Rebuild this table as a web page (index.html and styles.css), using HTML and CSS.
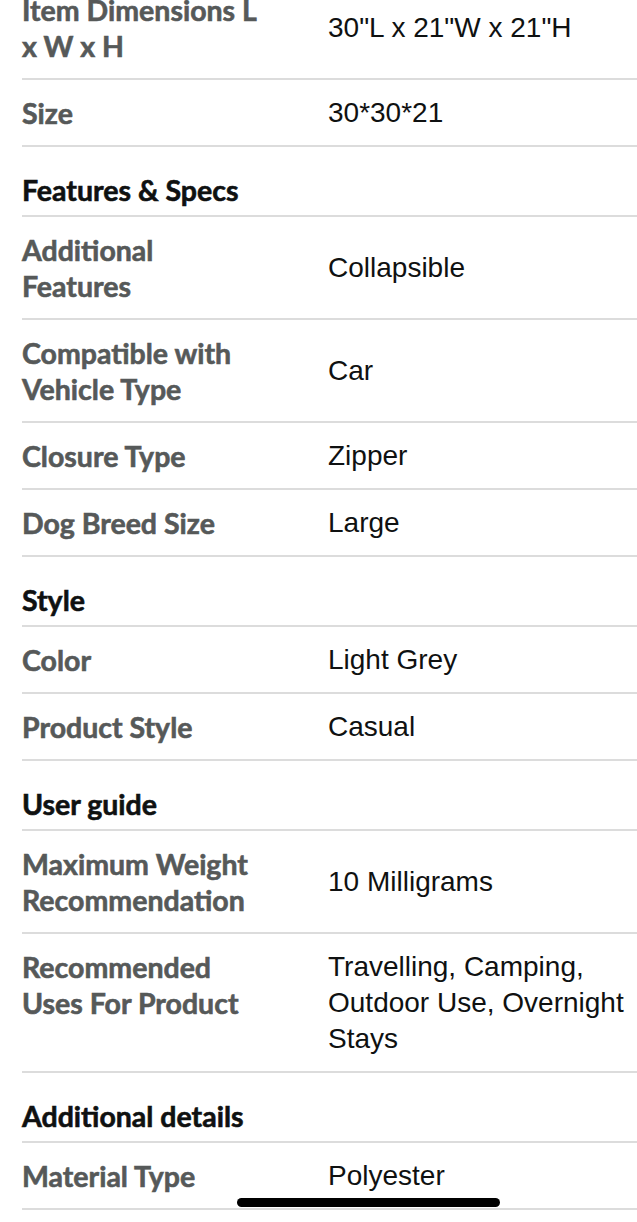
FILE: index.html
```html
<!DOCTYPE html>
<html lang="en">
<head>
<meta charset="utf-8">
<title>Product details</title>
<link rel="stylesheet" href="styles.css">
</head>
<body>
<div class="specs">
  <div class="row first"><div class="label">Item Dimensions L x W x H</div><div class="value">30"L x 21"W x 21"H</div></div>
  <div class="row"><div class="label">Size</div><div class="value">30*30*21</div></div>
  <div class="head">Features &amp; Specs</div>
  <div class="row"><div class="label">Additional Features</div><div class="value">Collapsible</div></div>
  <div class="row"><div class="label">Compatible with Vehicle Type</div><div class="value">Car</div></div>
  <div class="row"><div class="label">Closure Type</div><div class="value">Zipper</div></div>
  <div class="row"><div class="label">Dog Breed Size</div><div class="value">Large</div></div>
  <div class="head">Style</div>
  <div class="row"><div class="label">Color</div><div class="value">Light Grey</div></div>
  <div class="row"><div class="label">Product Style</div><div class="value">Casual</div></div>
  <div class="head">User guide</div>
  <div class="row"><div class="label">Maximum Weight Recommendation</div><div class="value">10 Milligrams</div></div>
  <div class="row"><div class="label">Recommended Uses For Product</div><div class="value">Travelling, Camping, Outdoor Use, Overnight Stays</div></div>
  <div class="head">Additional details</div>
  <div class="row"><div class="label">Material Type</div><div class="value">Polyester</div></div>
</div>
<div class="home-indicator"></div>
</body>
</html>
```
FILE: styles.css
```css
html, body {
  margin: 0;
  padding: 0;
  background: #ffffff;
}
body {
  font-family: Lato, "Liberation Sans", Arial, sans-serif;
  overflow: hidden;
  height: 1222px;
}
.specs {
  margin-left: 22px;
}
.row {
  display: grid;
  grid-template-columns: 306px 1fr;
  align-items: center;
  padding: 15px 8px 14px 0;
  line-height: 36px;
  border-bottom: 2px solid #dcdcdc;
}
.row.first {
  margin-top: -23px;
}
.label {
  align-self: start;
  font-weight: 700;
  font-size: 28.5px;
  color: #565959;
  -webkit-text-stroke: 0.6px #565959;
  padding-right: 64px;
}
.value {
  font-family: "Liberation Sans", Arial, sans-serif;
  font-size: 28px;
  color: #0f1111;
}
.head {
  font-weight: 700;
  font-size: 28.5px;
  color: #0f1111;
  -webkit-text-stroke: 0.6px #0f1111;
  line-height: 36px;
  padding: 25px 0 7px 0;
  border-bottom: 2px solid #dcdcdc;
}
.home-indicator {
  position: fixed;
  left: 237px;
  top: 1198px;
  width: 263px;
  height: 9px;
  border-radius: 5px;
  background: #000;
}
```
